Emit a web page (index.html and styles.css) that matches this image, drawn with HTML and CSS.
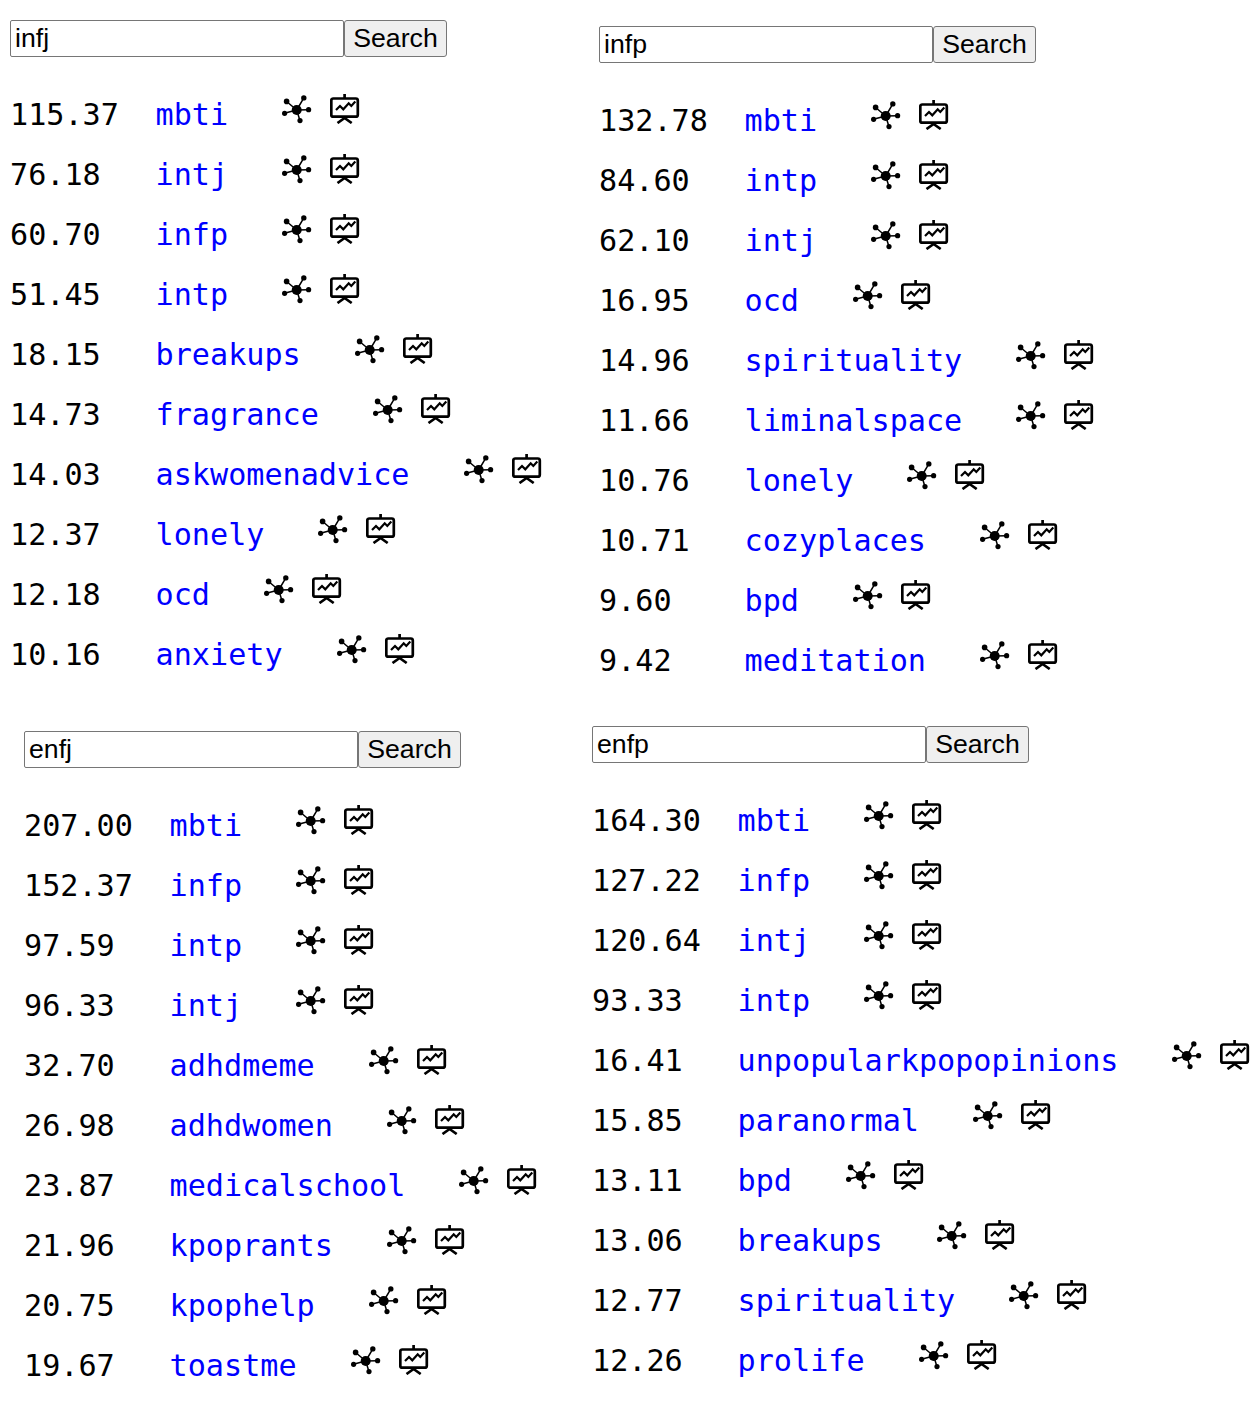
FILE: index.html
```html
<!DOCTYPE html>
<html lang="en">
<head>
<meta charset="utf-8">
<title>Subreddit similarity</title>
<link rel="stylesheet" href="styles.css">
</head>
<body>
<svg class="defs" width="0" height="0" aria-hidden="true">
  <symbol id="net" viewBox="0 0 30 30">
    <path class="net-lines" d="M14.7 16 4 7M14.7 16 22 3.7M14.7 16 26.7 15.7M14.7 16 18 26.7M14.7 16 2.3 19.3"/>
    <circle cx="14.7" cy="16" r="5"/>
    <circle cx="4.6" cy="7.4" r="2.8"/>
    <circle cx="21.8" cy="3.9" r="2.7"/>
    <circle cx="26.6" cy="15.7" r="2.6"/>
    <circle cx="18" cy="26.6" r="2.6"/>
    <circle cx="2.6" cy="19.3" r="2.6"/>
  </symbol>
  <symbol id="chart" viewBox="0 0 30 30">
    <g class="chart-lines">
      <rect x="1.3" y="4.5" width="26.5" height="18.2" rx="2"/>
      <path d="M14.6 0V4M14.6 24 7.5 29M14.6 24 21.7 29"/>
      <path class="chart-trend" d="M6 16 10 12 13.3 15.3 18.7 9.3 21.3 12 25.3 7.6"/>
    </g>
  </symbol>
</svg>
<main class="grid">
  <section class="panel panel-a">
    <form class="search"><input class="q" value="infj"><button class="go" type="button">Search</button></form>
    <ul class="list">
      <li><span class="score">115.37</span><a href="#">mbti</a><svg class="ico"><use href="#net"/></svg><svg class="ico"><use href="#chart"/></svg></li>
      <li><span class="score">76.18</span><a href="#">intj</a><svg class="ico"><use href="#net"/></svg><svg class="ico"><use href="#chart"/></svg></li>
      <li><span class="score">60.70</span><a href="#">infp</a><svg class="ico"><use href="#net"/></svg><svg class="ico"><use href="#chart"/></svg></li>
      <li><span class="score">51.45</span><a href="#">intp</a><svg class="ico"><use href="#net"/></svg><svg class="ico"><use href="#chart"/></svg></li>
      <li><span class="score">18.15</span><a href="#">breakups</a><svg class="ico"><use href="#net"/></svg><svg class="ico"><use href="#chart"/></svg></li>
      <li><span class="score">14.73</span><a href="#">fragrance</a><svg class="ico"><use href="#net"/></svg><svg class="ico"><use href="#chart"/></svg></li>
      <li><span class="score">14.03</span><a href="#">askwomenadvice</a><svg class="ico"><use href="#net"/></svg><svg class="ico"><use href="#chart"/></svg></li>
      <li><span class="score">12.37</span><a href="#">lonely</a><svg class="ico"><use href="#net"/></svg><svg class="ico"><use href="#chart"/></svg></li>
      <li><span class="score">12.18</span><a href="#">ocd</a><svg class="ico"><use href="#net"/></svg><svg class="ico"><use href="#chart"/></svg></li>
      <li><span class="score">10.16</span><a href="#">anxiety</a><svg class="ico"><use href="#net"/></svg><svg class="ico"><use href="#chart"/></svg></li>
    </ul>
  </section>
  <section class="panel panel-b">
    <form class="search"><input class="q" value="infp"><button class="go" type="button">Search</button></form>
    <ul class="list">
      <li><span class="score">132.78</span><a href="#">mbti</a><svg class="ico"><use href="#net"/></svg><svg class="ico"><use href="#chart"/></svg></li>
      <li><span class="score">84.60</span><a href="#">intp</a><svg class="ico"><use href="#net"/></svg><svg class="ico"><use href="#chart"/></svg></li>
      <li><span class="score">62.10</span><a href="#">intj</a><svg class="ico"><use href="#net"/></svg><svg class="ico"><use href="#chart"/></svg></li>
      <li><span class="score">16.95</span><a href="#">ocd</a><svg class="ico"><use href="#net"/></svg><svg class="ico"><use href="#chart"/></svg></li>
      <li><span class="score">14.96</span><a href="#">spirituality</a><svg class="ico"><use href="#net"/></svg><svg class="ico"><use href="#chart"/></svg></li>
      <li><span class="score">11.66</span><a href="#">liminalspace</a><svg class="ico"><use href="#net"/></svg><svg class="ico"><use href="#chart"/></svg></li>
      <li><span class="score">10.76</span><a href="#">lonely</a><svg class="ico"><use href="#net"/></svg><svg class="ico"><use href="#chart"/></svg></li>
      <li><span class="score">10.71</span><a href="#">cozyplaces</a><svg class="ico"><use href="#net"/></svg><svg class="ico"><use href="#chart"/></svg></li>
      <li><span class="score">9.60</span><a href="#">bpd</a><svg class="ico"><use href="#net"/></svg><svg class="ico"><use href="#chart"/></svg></li>
      <li><span class="score">9.42</span><a href="#">meditation</a><svg class="ico"><use href="#net"/></svg><svg class="ico"><use href="#chart"/></svg></li>
    </ul>
  </section>
  <section class="panel panel-c">
    <form class="search"><input class="q" value="enfj"><button class="go" type="button">Search</button></form>
    <ul class="list">
      <li><span class="score">207.00</span><a href="#">mbti</a><svg class="ico"><use href="#net"/></svg><svg class="ico"><use href="#chart"/></svg></li>
      <li><span class="score">152.37</span><a href="#">infp</a><svg class="ico"><use href="#net"/></svg><svg class="ico"><use href="#chart"/></svg></li>
      <li><span class="score">97.59</span><a href="#">intp</a><svg class="ico"><use href="#net"/></svg><svg class="ico"><use href="#chart"/></svg></li>
      <li><span class="score">96.33</span><a href="#">intj</a><svg class="ico"><use href="#net"/></svg><svg class="ico"><use href="#chart"/></svg></li>
      <li><span class="score">32.70</span><a href="#">adhdmeme</a><svg class="ico"><use href="#net"/></svg><svg class="ico"><use href="#chart"/></svg></li>
      <li><span class="score">26.98</span><a href="#">adhdwomen</a><svg class="ico"><use href="#net"/></svg><svg class="ico"><use href="#chart"/></svg></li>
      <li><span class="score">23.87</span><a href="#">medicalschool</a><svg class="ico"><use href="#net"/></svg><svg class="ico"><use href="#chart"/></svg></li>
      <li><span class="score">21.96</span><a href="#">kpoprants</a><svg class="ico"><use href="#net"/></svg><svg class="ico"><use href="#chart"/></svg></li>
      <li><span class="score">20.75</span><a href="#">kpophelp</a><svg class="ico"><use href="#net"/></svg><svg class="ico"><use href="#chart"/></svg></li>
      <li><span class="score">19.67</span><a href="#">toastme</a><svg class="ico"><use href="#net"/></svg><svg class="ico"><use href="#chart"/></svg></li>
    </ul>
  </section>
  <section class="panel panel-d">
    <form class="search"><input class="q" value="enfp"><button class="go" type="button">Search</button></form>
    <ul class="list">
      <li><span class="score">164.30</span><a href="#">mbti</a><svg class="ico"><use href="#net"/></svg><svg class="ico"><use href="#chart"/></svg></li>
      <li><span class="score">127.22</span><a href="#">infp</a><svg class="ico"><use href="#net"/></svg><svg class="ico"><use href="#chart"/></svg></li>
      <li><span class="score">120.64</span><a href="#">intj</a><svg class="ico"><use href="#net"/></svg><svg class="ico"><use href="#chart"/></svg></li>
      <li><span class="score">93.33</span><a href="#">intp</a><svg class="ico"><use href="#net"/></svg><svg class="ico"><use href="#chart"/></svg></li>
      <li><span class="score">16.41</span><a href="#">unpopularkpopopinions</a><svg class="ico"><use href="#net"/></svg><svg class="ico"><use href="#chart"/></svg></li>
      <li><span class="score">15.85</span><a href="#">paranormal</a><svg class="ico"><use href="#net"/></svg><svg class="ico"><use href="#chart"/></svg></li>
      <li><span class="score">13.11</span><a href="#">bpd</a><svg class="ico"><use href="#net"/></svg><svg class="ico"><use href="#chart"/></svg></li>
      <li><span class="score">13.06</span><a href="#">breakups</a><svg class="ico"><use href="#net"/></svg><svg class="ico"><use href="#chart"/></svg></li>
      <li><span class="score">12.77</span><a href="#">spirituality</a><svg class="ico"><use href="#net"/></svg><svg class="ico"><use href="#chart"/></svg></li>
      <li><span class="score">12.26</span><a href="#">prolife</a><svg class="ico"><use href="#net"/></svg><svg class="ico"><use href="#chart"/></svg></li>
    </ul>
  </section>
</main>
</body>
</html>
```
FILE: styles.css
```css
html, body {
  margin: 0;
  padding: 0;
  background: #fff;
}
.defs {
  position: absolute;
}
.grid {
  display: grid;
  grid-template-columns: 592px 666px;
  grid-template-rows: 706px 694px;
  width: 1258px;
  overflow: hidden;
}
.panel-a { padding: 20px 0 0 10px; }
.panel-b { padding: 26px 0 0 7px; }
.panel-c { padding: 25px 0 0 24px; }
.panel-d { padding: 20px 0 0 0; }
.search {
  display: flex;
  margin: 0;
  height: 37px;
}
.q {
  box-sizing: border-box;
  width: 334px;
  height: 37px;
  margin: 0;
  padding: 1px 4px;
  border: 1px solid #767676;
  border-radius: 2px;
  font: 26.67px "Liberation Sans", Arial, sans-serif;
  color: #000;
}
.go {
  box-sizing: border-box;
  width: 103px;
  height: 37px;
  margin: 0;
  padding: 0;
  border: 1px solid #767676;
  border-radius: 3px;
  background: #efefef;
  font: 26.67px "Liberation Sans", Arial, sans-serif;
  color: #000;
}
.list {
  list-style: none;
  margin: 27px 0 0;
  padding: 0;
  font: 30.13px "DejaVu Sans Mono", monospace;
}
.list li {
  display: flex;
  align-items: center;
  height: 60px;
  white-space: nowrap;
}
.score {
  width: 145.6px;
  flex: none;
  color: #000;
}
.list a {
  color: #00f;
  text-decoration: none;
  margin-right: 54px;
}
.ico {
  width: 30px;
  height: 30px;
  flex: none;
  margin-top: -10px;
  fill: #000;
}
.ico + .ico {
  margin-left: 18px;
}
.net-lines {
  stroke: #000;
  stroke-width: 1.5;
  fill: none;
}
.chart-lines {
  stroke: #000;
  stroke-width: 2.7;
  fill: none;
}
.chart-trend {
  stroke-width: 2.2;
}
```
